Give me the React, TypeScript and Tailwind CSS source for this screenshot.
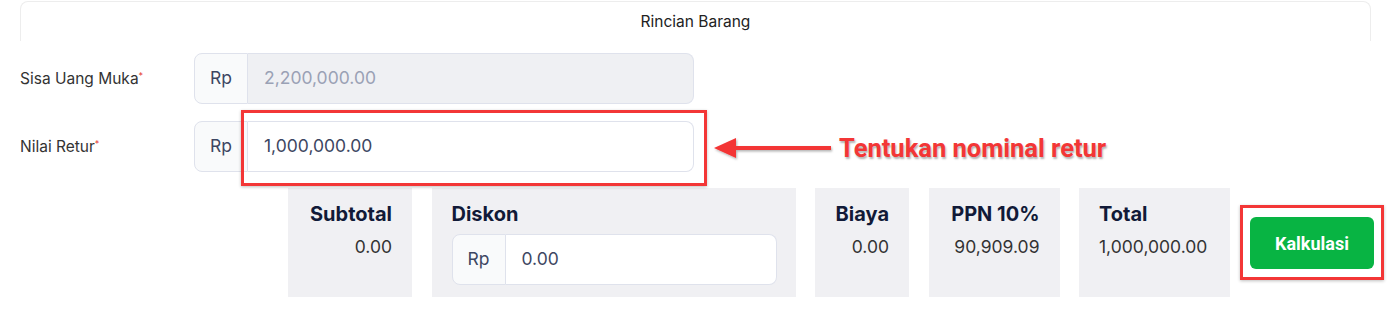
import React from "react";

const inter = { fontFamily: "Inter, 'Noto Sans', sans-serif" };

function RpInput({ value, disabled }: { value: string; disabled?: boolean }) {
  return (
    <div className="flex h-[51px] w-[500px]">
      <div className="flex w-[54px] items-center justify-center rounded-l-lg border border-[#dfe2ec] bg-[#f9fafb] text-[17.5px] text-[#3d4662]">
        Rp
      </div>
      <div
        className={`flex flex-1 items-center rounded-r-lg border border-l-0 border-[#dfe2ec] pl-4 text-[17.5px] ${
          disabled ? "bg-[#eff0f3] text-[#9aa1b5]" : "bg-white text-[#3d4662]"
        }`}
      >
        {value}
      </div>
    </div>
  );
}

function Field({ label, children }: { label: string; children: React.ReactNode }) {
  return (
    <div className="flex items-center">
      <div className="w-[174px] text-[15.5px] text-[#333]">
        {label}
        <sup className="text-[9px] text-[#e53935]">*</sup>
      </div>
      {children}
    </div>
  );
}

function SumBox({
  title,
  value,
  w,
  align,
}: {
  title: string;
  value: string;
  w: string;
  align: "left" | "right";
}) {
  return (
    <div
      className={`h-[109px] ${w} whitespace-nowrap bg-[#f0f0f3] px-5 pt-3 ${
        align === "right" ? "text-right" : "text-left"
      }`}
    >
      <div className="text-[20px] font-bold leading-7 text-[#111a38]">{title}</div>
      <div className="mt-1.5 text-[17.5px] text-[#333]">{value}</div>
    </div>
  );
}

export default function App() {
  return (
    <div className="relative h-[311px] w-[1395px] bg-white" style={inter}>
      {/* Header */}
      <div className="ml-5 mt-px flex h-10 w-[1351px] items-center justify-center rounded-t-lg border-x border-t border-[#ededed] text-[15.5px] text-[#222]">
        Rincian Barang
      </div>

      <div className="ml-5 mt-3 flex flex-col gap-[17px]">
        <Field label="Sisa Uang Muka">
          <RpInput value="2,200,000.00" disabled />
        </Field>
        <Field label="Nilai Retur">
          <RpInput value="1,000,000.00" />
        </Field>
      </div>

      {/* Summary */}
      <div className="ml-[288px] mt-4 flex items-center gap-[19.5px]">
        <SumBox title="Subtotal" value="0.00" w="w-[124px]" align="right" />
        <div className="h-[109px] w-[364px] bg-[#f0f0f3] px-5 pt-3">
          <div className="text-[20px] font-bold leading-7 text-[#111a38]">Diskon</div>
          <div className="mt-1.5 flex h-[51px] w-[325px]">
            <div className="flex w-[54px] items-center justify-center rounded-l-lg border border-[#dfe2ec] bg-[#f9fafb] text-[17.5px] text-[#3d4662]">
              Rp
            </div>
            <div className="flex flex-1 items-center rounded-r-lg border border-l-0 border-[#dfe2ec] bg-white pl-4 text-[17.5px] text-[#3d4662]">
              0.00
            </div>
          </div>
        </div>
        <SumBox title="Biaya" value="0.00" w="w-[94px]" align="right" />
        <SumBox title="PPN 10%" value="90,909.09" w="w-[131px]" align="right" />
        <SumBox title="Total" value="1,000,000.00" w="w-[151px]" align="left" />
        <div className="ml-[-9.5px] border-[3px] border-[#f33636] px-[7px] pb-[8px] pt-[9px] shadow-[0_1px_3px_rgba(0,0,0,0.25)]">
          <button
            className="block h-[52px] w-[124px] rounded-md bg-[#08b443] text-[18px] font-bold text-white"
            style={{ fontFamily: "Roboto, 'Liberation Sans', sans-serif" }}
          >
            Kalkulasi
          </button>
        </div>
      </div>

      {/* Annotation: highlight around Nilai Retur input */}
      <div className="absolute left-[241px] top-[109px] h-[76px] w-[466px] border-[3px] border-[#f33636] shadow-[0_1px_3px_rgba(0,0,0,0.25)]" />
      <svg className="absolute left-[712px] top-[134px]" width="122" height="28" viewBox="0 0 122 28">
        <defs>
          <filter id="sh" x="-10%" y="-30%" width="120%" height="160%">
            <feDropShadow dx="1" dy="1.5" stdDeviation="1" floodColor="#000" floodOpacity="0.3" />
          </filter>
        </defs>
        <g filter="url(#sh)" fill="#f33636">
          <polygon points="2,13 24,3 24,23" />
          <rect x="22" y="11" width="97" height="4" />
        </g>
      </svg>
      <div
        className="absolute left-[839px] top-[131px] text-[25.5px] font-bold leading-[32px] text-[#f33636] [text-shadow:1px_1.5px_2px_rgba(0,0,0,0.3)]"
        style={{ fontFamily: "Roboto, 'Liberation Sans', sans-serif" }}
      >
        Tentukan nominal retur
      </div>
    </div>
  );
}
